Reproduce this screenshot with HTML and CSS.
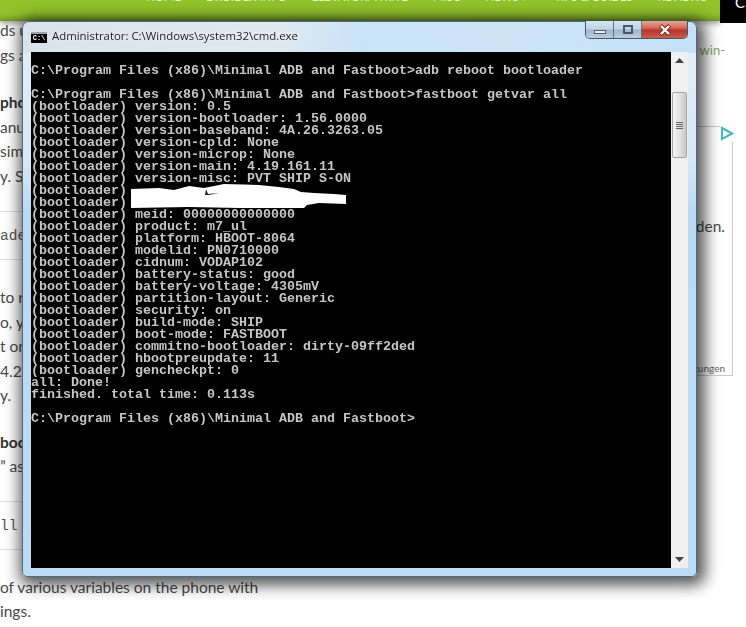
FILE: index.html
```html
<!DOCTYPE html>
<html lang="en">
<head>
<meta charset="utf-8">
<title>cmd.exe screenshot</title>
<link rel="stylesheet" href="styles.css">
</head>
<body>
<div class="page">
  <header class="topbar">
    <nav class="nav">
      <span>Home</span>
      <span>Droider Info</span>
      <span>Elevator/Write</span>
      <span>Misc</span>
      <span class="news">News <i class="caret">▾</i></span>
      <span class="tips">Tips &amp; Guides</span>
      <span>Reviews</span>
    </nav>
    <div class="corner">C</div>
  </header>
  <div class="columns">
    <main class="article">
      <p>ds u<br>gs a</p>
      <p class="gap-a"><b>pho</b><br>anu<br>sim<br>y. Si</p>
      <pre class="code gap-a">ade</pre>
      <p class="gap-b">to r<br>o, y<br>t on<br>4.2.<br>y.</p>
      <p class="gap-c"><b>boot</b><br>” as</p>
      <pre class="code gap-c code-short">ll</pre>
      <p class="gap-b">of various variables on the phone with<br>ings.</p>
    </main>
    <aside class="side">
      <h2 class="update">Update</h2>
      <div class="win-link">win-</div>
      <div class="ad">
        <svg class="ad-mark" width="14" height="15" viewBox="0 0 14 15"><path d="M2 2 L12 7.5 L2 13 Z" fill="none" stroke="#4fb8c4" stroke-width="2.2"/></svg>
        <div class="ad-main">den.</div>
        <div class="ad-foot">gungen</div>
      </div>
    </aside>
  </div>
  <section class="window">
    <div class="titlebar">
      <span class="cmd-icon">C:\</span>
      <span class="title">Administrator: C:\Windows\system32\cmd.exe</span>
      <div class="caption">
        <div class="cap cap-min"><i></i></div>
        <div class="cap cap-max"><i></i></div>
        <div class="cap cap-close">
          <svg width="14" height="12" viewBox="0 0 14 12"><path d="M2.5 1.5 L11.5 10.5 M11.5 1.5 L2.5 10.5" stroke="#6b2a22" stroke-width="4"/><path d="M3 2 L11 10 M11 2 L3 10" stroke="#fff" stroke-width="2.4"/></svg>
        </div>
      </div>
    </div>
    <div class="client">
      <div class="console">
<pre class="console-text">
C:\Program Files (x86)\Minimal ADB and Fastboot&gt;adb reboot bootloader

C:\Program Files (x86)\Minimal ADB and Fastboot&gt;fastboot getvar all
(bootloader) version: 0.5
(bootloader) version-bootloader: 1.56.0000
(bootloader) version-baseband: 4A.26.3263.05
(bootloader) version-cpld: None
(bootloader) version-microp: None
(bootloader) version-main: 4.19.161.11
(bootloader) version-misc: PVT SHIP S-ON
(bootloader)
(bootloader)
(bootloader) meid: 00000000000000
(bootloader) product: m7_ul
(bootloader) platform: HBOOT-8064
(bootloader) modelid: PN0710000
(bootloader) cidnum: VODAP102
(bootloader) battery-status: good
(bootloader) battery-voltage: 4305mV
(bootloader) partition-layout: Generic
(bootloader) security: on
(bootloader) build-mode: SHIP
(bootloader) boot-mode: FASTBOOT
(bootloader) commitno-bootloader: dirty-09ff2ded
(bootloader) hbootpreupdate: 11
(bootloader) gencheckpt: 0
all: Done!
finished. total time: 0.113s

C:\Program Files (x86)\Minimal ADB and Fastboot&gt;</pre>
        <svg class="scribble" width="220" height="26" viewBox="0 0 220 26"><path d="M2 6 L30 5 L45 7 L60 3 L75 5 L95 1 L130 2 L150 4 L165 6 L172 9 L185 10 L205 11 L217 12 L217 21 L190 20 L178 22 L175 25 L110 25 L60 24 L2 25 Z" fill="#fff"/><path d="M77 6 L79 11 L90 10 L80 12 L76 12 Z" fill="#222"/></svg>
      </div>
      <div class="scrollbar">
        <div class="arrow-btn"><svg width="9" height="5" viewBox="0 0 9 5"><path d="M0 5 L4.5 0 L9 5 Z" fill="#444"/></svg></div>
        <div class="track track-top"></div>
        <div class="thumb"><i></i><i></i><i></i><i></i></div>
        <div class="track"></div>
        <div class="arrow-btn"><svg width="9" height="5" viewBox="0 0 9 5"><path d="M0 0 L4.5 5 L9 0 Z" fill="#444"/></svg></div>
      </div>
    </div>
  </section>
</div>
</body>
</html>
```
FILE: styles.css
```css
* { box-sizing: border-box; }
html, body { margin: 0; padding: 0; }
body { background: #fff; }
.page {
  position: relative;
  width: 746px;
  height: 627px;
  overflow: hidden;
  background: #fff;
  font-family: Lato, "Liberation Sans", sans-serif;
  color: #4a4a4a;
}
.topbar { display: flex; align-items: flex-start; height: 23px; }
.nav {
  flex: 1;
  height: 21px;
  display: flex;
  gap: 25px;
  padding-left: 146px;
  overflow: hidden;
  background: linear-gradient(#90c32a 0, #90c32a 13px, #82ad2a 18px, #6f8f28 21px);
  box-shadow: 0 3px 5px rgba(0, 0, 0, .35);
  color: #e9f4cf;
  font-size: 11.4px;
  line-height: 14px;
  text-transform: uppercase;
  white-space: nowrap;
}
.nav span { margin-top: -10px; }
.caret { font-style: normal; font-size: 9px; }
.news { margin-right: 3px; }
.corner {
  width: 26px;
  height: 23px;
  padding-left: 15px;
  background: #000;
  color: #fff;
  font-size: 15px;
  line-height: 5px;
  overflow: hidden;
}
.columns { display: flex; }
.article { width: 430px; flex: none; }
.article p {
  margin: -5px 0 0;
  font-size: 15.5px;
  line-height: 24.5px;
  color: #4a4a4a;
  white-space: nowrap;
}
.article p.gap-a { margin-top: 23px; }
.article p.gap-b { margin-top: 25px; }
.article p.gap-c { margin-top: 22px; }
.article b { color: #333; }
.code {
  height: 49px;
  margin: 0;
  padding-top: 15px;
  border-top: 1px solid #ddd;
  border-bottom: 1px solid #ddd;
  font-family: "Liberation Mono", monospace;
  font-size: 14.5px;
  line-height: 18px;
  color: #555;
}
.gap-a.code { margin-top: 23px; }
.gap-c.code { margin-top: 22px; }
.side { flex: 1; padding-right: 13px; }
.update {
  margin: 5px 0 0;
  font-size: 23px;
  line-height: 30px;
  color: #2e6a80;
}
.win-link {
  margin-top: -16px;
  text-align: right;
  padding-right: 8px;
  font-size: 13px;
  line-height: 16px;
  color: #8d9f72;
}
.ad {
  position: relative;
  margin-top: 68px;
  height: 250px;
  border: 1px solid #ccc;
  padding-right: 7px;
  text-align: right;
}
.ad-mark { position: absolute; right: -2px; top: -1px; background: #fff; }
.ad-main { margin-top: 89px; font-size: 15.5px; line-height: 20px; color: #4a4a4a; }
.ad-foot { margin-top: 125px; font-size: 10px; line-height: 14px; color: #666; }

.window {
  position: absolute;
  left: 22px;
  top: 21px;
  width: 675px;
  height: 556px;
  display: flex;
  flex-direction: column;
  border-radius: 7px 7px 5px 5px;
  border: 1px solid #4f6a80;
  background:
    linear-gradient(90deg, rgba(216, 226, 232, .9) 0, rgba(222, 232, 240, .85) 38%, rgba(186, 220, 246, .62) 50%, rgba(186, 220, 246, .55) 72%, rgba(190, 222, 247, .82) 100%) top / 100% 31px no-repeat,
    linear-gradient(#e4eef6 0, #d8e8f5 25%, #bcd9f3 34%, #bcdcf6 100%);
  -webkit-backdrop-filter: blur(2px);
  backdrop-filter: blur(2px);
  box-shadow: 3px 3px 15px 5px rgba(0, 0, 0, .68);
}
.titlebar {
  flex: none;
  position: relative;
  height: 30px;
  display: flex;
  align-items: flex-start;
  padding: 10px 0 0 8px;
}
.cmd-icon {
  width: 16px;
  height: 11px;
  background: #000;
  border-top: 2px solid #9aa4ae;
  color: #fff;
  font: bold 7px/9px "Liberation Mono", monospace;
  text-align: center;
  overflow: hidden;
}
.title {
  margin: -5px 0 0 5px;
  font-family: "Open Sans", "Noto Sans", sans-serif;
  font-size: 11.4px;
  line-height: 17px;
  color: #1e1e1e;
  text-shadow: 0 0 6px #fff;
  white-space: nowrap;
}
.caption {
  position: absolute;
  right: 8px;
  top: -1px;
  height: 18px;
  display: flex;
  border: 1px solid #46596c;
  border-top: 0;
  border-radius: 0 0 5px 5px;
  overflow: hidden;
}
.cap { height: 17px; display: flex; align-items: center; justify-content: center; }
.cap-min, .cap-max {
  width: 28px;
  border-right: 1px solid #5e7388;
  background: linear-gradient(#d3e5f3 0, #c0d5e8 45%, #9fb6cc 55%, #bccfe1 100%);
}
.cap-min i { display: block; width: 12px; height: 4px; margin-top: 4px; background: #e9f0f6; border: 1px solid #53606e; }
.cap-max i { display: block; width: 10px; height: 9px; border: 2px solid #4a5866; background: transparent; }
.cap-close {
  width: 45px;
  background: linear-gradient(#e2a79c 0, #d6695a 40%, #b8352a 55%, #c95d4c 100%);
}
.client { flex: 1; display: flex; padding: 0 8px 8px; min-height: 0; }
.console {
  position: relative;
  width: 640px;
  height: 516px;
  background: #000;
  overflow: hidden;
}
.console-text {
  margin: 0;
  padding: 0;
  padding-top: 13px;
  font-family: "Liberation Mono", monospace;
  font-weight: 700;
  font-size: 13.33px;
  line-height: 12px;
  color: #c6c6c6;
}
.scribble { position: absolute; left: 98px; top: 131px; }
.scrollbar {
  width: 17px;
  height: 516px;
  display: flex;
  flex-direction: column;
  background: #f0f0f0;
}
.arrow-btn { height: 17px; flex: none; display: flex; align-items: center; justify-content: center; }
.track { flex: 1; }
.track-top { flex: none; height: 23px; }
.thumb {
  flex: none;
  height: 66px;
  margin: 0 1px;
  display: flex;
  flex-direction: column;
  align-items: center;
  justify-content: center;
  gap: 1px;
  border: 1px solid #a5a5a5;
  border-radius: 2px;
  background: linear-gradient(90deg, #f4f4f4 0, #e2e2e2 50%, #c9c9c9 100%);
}
.thumb i { display: block; width: 7px; height: 1px; background: #666; }
```
